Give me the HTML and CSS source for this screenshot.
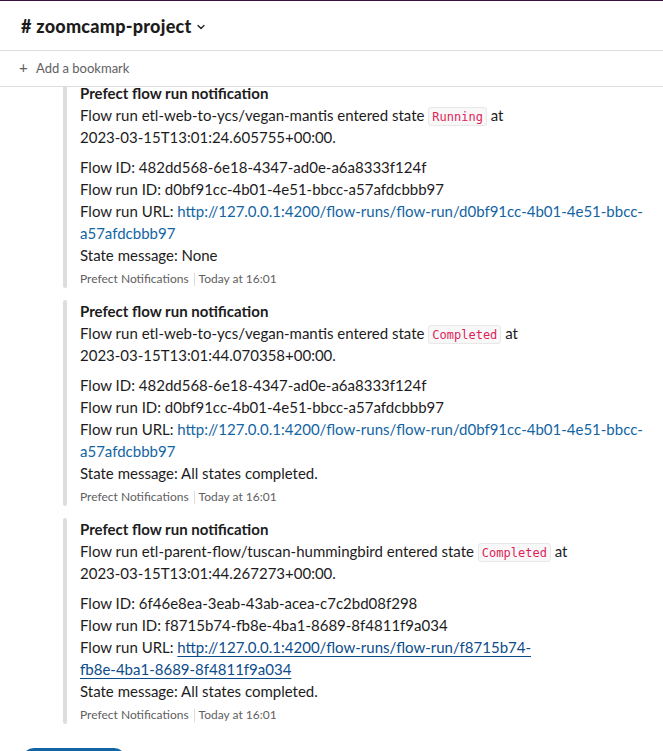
FILE: index.html
```html
<!DOCTYPE html>
<html lang="en">
<head>
<meta charset="utf-8">
<title>zoomcamp-project</title>
<link rel="stylesheet" href="styles.css">
</head>
<body>
<div class="app">
  <div class="topline"></div>
  <header class="header">
    <span class="channel"><span class="hash">#</span> zoomcamp-project</span>
    <svg class="chev" width="10" height="10" viewBox="0 0 10 10"><path d="M2 3.5 L5 6.5 L8 3.5" fill="none" stroke="#1d1c1d" stroke-width="1.3" stroke-linecap="round" stroke-linejoin="round"/></svg>
  </header>
  <div class="bookmarks">
    <span class="plus">+</span><span class="bm-text">Add a bookmark</span>
  </div>
  <main class="messages">
    <div class="scroll">
      <div class="att">
        <div class="bar"></div>
        <div class="att-body">
          <div class="title">Prefect flow run notification</div>
          <p class="para">Flow run etl-web-to-ycs/vegan-mantis entered state <code class="code">Running</code> at <span class="nw">2023-03-15T13:01:24.605755+00:00.</span></p>
          <p class="para">Flow ID: 482dd568-6e18-4347-ad0e-a6a8333f124f<br>Flow run ID: d0bf91cc-4b01-4e51-bbcc-a57afdcbbb97<br>Flow run URL: <a class="link" href="#"><span class="nw">http://127.0.0.1:4200/flow-runs/flow-run/d0bf91cc-4b01-4e51-bbcc-</span><span class="nw">a57afdcbbb97</span></a><br>State message: None</p>
          <div class="footer"><span>Prefect Notifications</span><span class="sep"></span><span>Today at 16:01</span></div>
        </div>
      </div>
      <div class="att">
        <div class="bar"></div>
        <div class="att-body">
          <div class="title">Prefect flow run notification</div>
          <p class="para">Flow run etl-web-to-ycs/vegan-mantis entered state <code class="code">Completed</code> at <span class="nw">2023-03-15T13:01:44.070358+00:00.</span></p>
          <p class="para">Flow ID: 482dd568-6e18-4347-ad0e-a6a8333f124f<br>Flow run ID: d0bf91cc-4b01-4e51-bbcc-a57afdcbbb97<br>Flow run URL: <a class="link" href="#"><span class="nw">http://127.0.0.1:4200/flow-runs/flow-run/d0bf91cc-4b01-4e51-bbcc-</span><span class="nw">a57afdcbbb97</span></a><br>State message: All states completed.</p>
          <div class="footer"><span>Prefect Notifications</span><span class="sep"></span><span>Today at 16:01</span></div>
        </div>
      </div>
      <div class="att">
        <div class="bar"></div>
        <div class="att-body">
          <div class="title">Prefect flow run notification</div>
          <p class="para">Flow run etl-parent-flow/tuscan-hummingbird entered state <code class="code">Completed</code> at <span class="nw">2023-03-15T13:01:44.267273+00:00.</span></p>
          <p class="para">Flow ID: 6f46e8ea-3eab-43ab-acea-c7c2bd08f298<br>Flow run ID: f8715b74-fb8e-4ba1-8689-8f4811f9a034<br>Flow run URL: <a class="link link-hover" href="#"><span class="nw">http://127.0.0.1:4200/flow-runs/flow-run/f8715b74-</span><span class="nw">fb8e-4ba1-8689-8f4811f9a034</span></a><br>State message: All states completed.</p>
          <div class="footer"><span>Prefect Notifications</span><span class="sep"></span><span>Today at 16:01</span></div>
        </div>
      </div>
      <div class="jump"></div>
    </div>
  </main>
</div>
</body>
</html>
```
FILE: styles.css
```css
html, body {
  margin: 0;
  padding: 0;
  background: #ffffff;
}
body {
  font-family: Lato, "Noto Sans", sans-serif;
  color: #1d1c1d;
  height: 751px;
  overflow: hidden;
}
.app {
  display: flex;
  flex-direction: column;
  height: 751px;
}
.topline {
  height: 1px;
  background: #3f0e40;
  flex: none;
}
.header {
  flex: none;
  height: 50px;
  box-sizing: border-box;
  border-bottom: 1px solid #dddddd;
  display: flex;
  align-items: center;
  padding-left: 21px;
  padding-top: 1px;
}
.channel {
  font-size: 18px;
  font-weight: 900;
  line-height: 22px;
  letter-spacing: 0.25px;
}
.chev {
  margin-left: 4px;
  margin-top: 1px;
}
.bookmarks {
  flex: none;
  height: 36px;
  box-sizing: border-box;
  border-bottom: 1px solid #dddddd;
  display: flex;
  align-items: center;
  padding-left: 19px;
  padding-bottom: 2px;
  font-size: 13px;
  color: #616061;
}
.plus {
  font-size: 15px;
  width: 17px;
  margin-top: -1px;
}
.messages {
  flex: 1;
  overflow: hidden;
}
.scroll {
  margin-top: -5px;
}
.att {
  display: flex;
  margin-left: 63px;
  margin-right: 18px;
  margin-bottom: 12px;
}
.bar {
  flex: none;
  width: 4px;
  border-radius: 4px;
  background: #dddddd;
  margin-right: 13px;
}
.att-body {
  flex: 1;
  font-size: 15px;
  line-height: 22px;
}
.title {
  font-weight: 700;
}
.para {
  margin: 0;
}
.para + .para {
  margin-top: 8px;
}
.nw {
  white-space: nowrap;
}
.code {
  font-family: "DejaVu Sans Mono", "Liberation Mono", monospace;
  font-size: 12px;
  line-height: 16px;
  color: #e01e5a;
  background: #f8f8f8;
  border: 1px solid #e8e8e8;
  border-radius: 3px;
  padding: 2px 3px 1px;
}
.link {
  color: #1264a3;
  text-decoration: none;
}
.link-hover {
  color: #0b4c8c;
  text-decoration: underline;
  text-underline-offset: 3px;
}
.footer {
  margin-top: 4px;
  font-size: 12px;
  line-height: 18px;
  color: #616061;
  display: flex;
  align-items: center;
}
.sep {
  width: 1px;
  height: 13px;
  background: #dddddd;
  margin: 0 4px 0 5px;
}
.jump {
  margin-top: 24px;
  margin-left: 22px;
  width: 104px;
  height: 32px;
  border-radius: 12px;
  background: #1264a3;
}
```
